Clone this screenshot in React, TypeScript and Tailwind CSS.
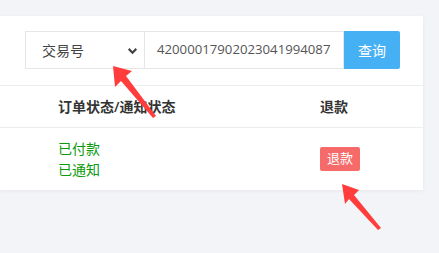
export default function App() {
  return (
    <div
      className="relative h-[253px] w-[439px] overflow-hidden bg-[#f3f4f8] pt-[16px] text-[14px] text-[#333]"
      style={{ fontFamily: '"Open Sans", "Noto Sans CJK SC", sans-serif' }}
    >
      <div className="w-[423px] bg-white shadow-[0_1px_4px_rgba(0,0,0,0.06)]">
        {/* search bar */}
        <div className="flex justify-end pr-[23px] pt-[15px] pb-[16px]">
          <div className="flex h-[38px] w-[120px] items-center justify-between border border-[#e6e6e6] pl-[16px] pr-[5px] text-[#444]">
            <span>交易号</span>
            <svg width="13" height="13" viewBox="0 0 12 12">
              <path d="M2.5 4.5 L6 8 L9.5 4.5" fill="none" stroke="#444" strokeWidth="2" />
            </svg>
          </div>
          <div className="flex h-[38px] w-[199px] items-center border border-l-0 border-[#e6e6e6] pl-[12px] text-[13.2px] text-[#555]">
            42000017902023041994087
          </div>
          <button className="h-[38px] w-[56px] rounded-r-[2px] bg-[#46b0f5] text-white">查询</button>
        </div>

        {/* table */}
        <div className="flex h-[43px] items-center border-t border-b border-[#ebedf0] font-semibold">
          <div className="w-[320px] pl-[58px]">订单状态/通知状态</div>
          <div>退款</div>
        </div>
        <div className="flex h-[62px] items-center">
          <div className="w-[320px] pl-[58px] leading-[21px] text-[#0a9a0a]">
            <div>已付款</div>
            <div>已通知</div>
          </div>
          <span className="flex h-[24px] w-[40px] items-center justify-center rounded-[2px] bg-[#f76a6a] text-[13px] text-white">
            退款
          </span>
        </div>
      </div>

      {/* annotation arrows */}
      <svg className="pointer-events-none absolute left-0 top-0" width="439" height="253">
        <g fill="#ff3d3d">
          <polygon points="113,66 132,71 126,76 156,116 153,118 121,81 115,87" />
          <polygon points="342,184 359,190 354,195 381,228 378,230 349,199 345,204" />
        </g>
      </svg>
    </div>
  );
}
